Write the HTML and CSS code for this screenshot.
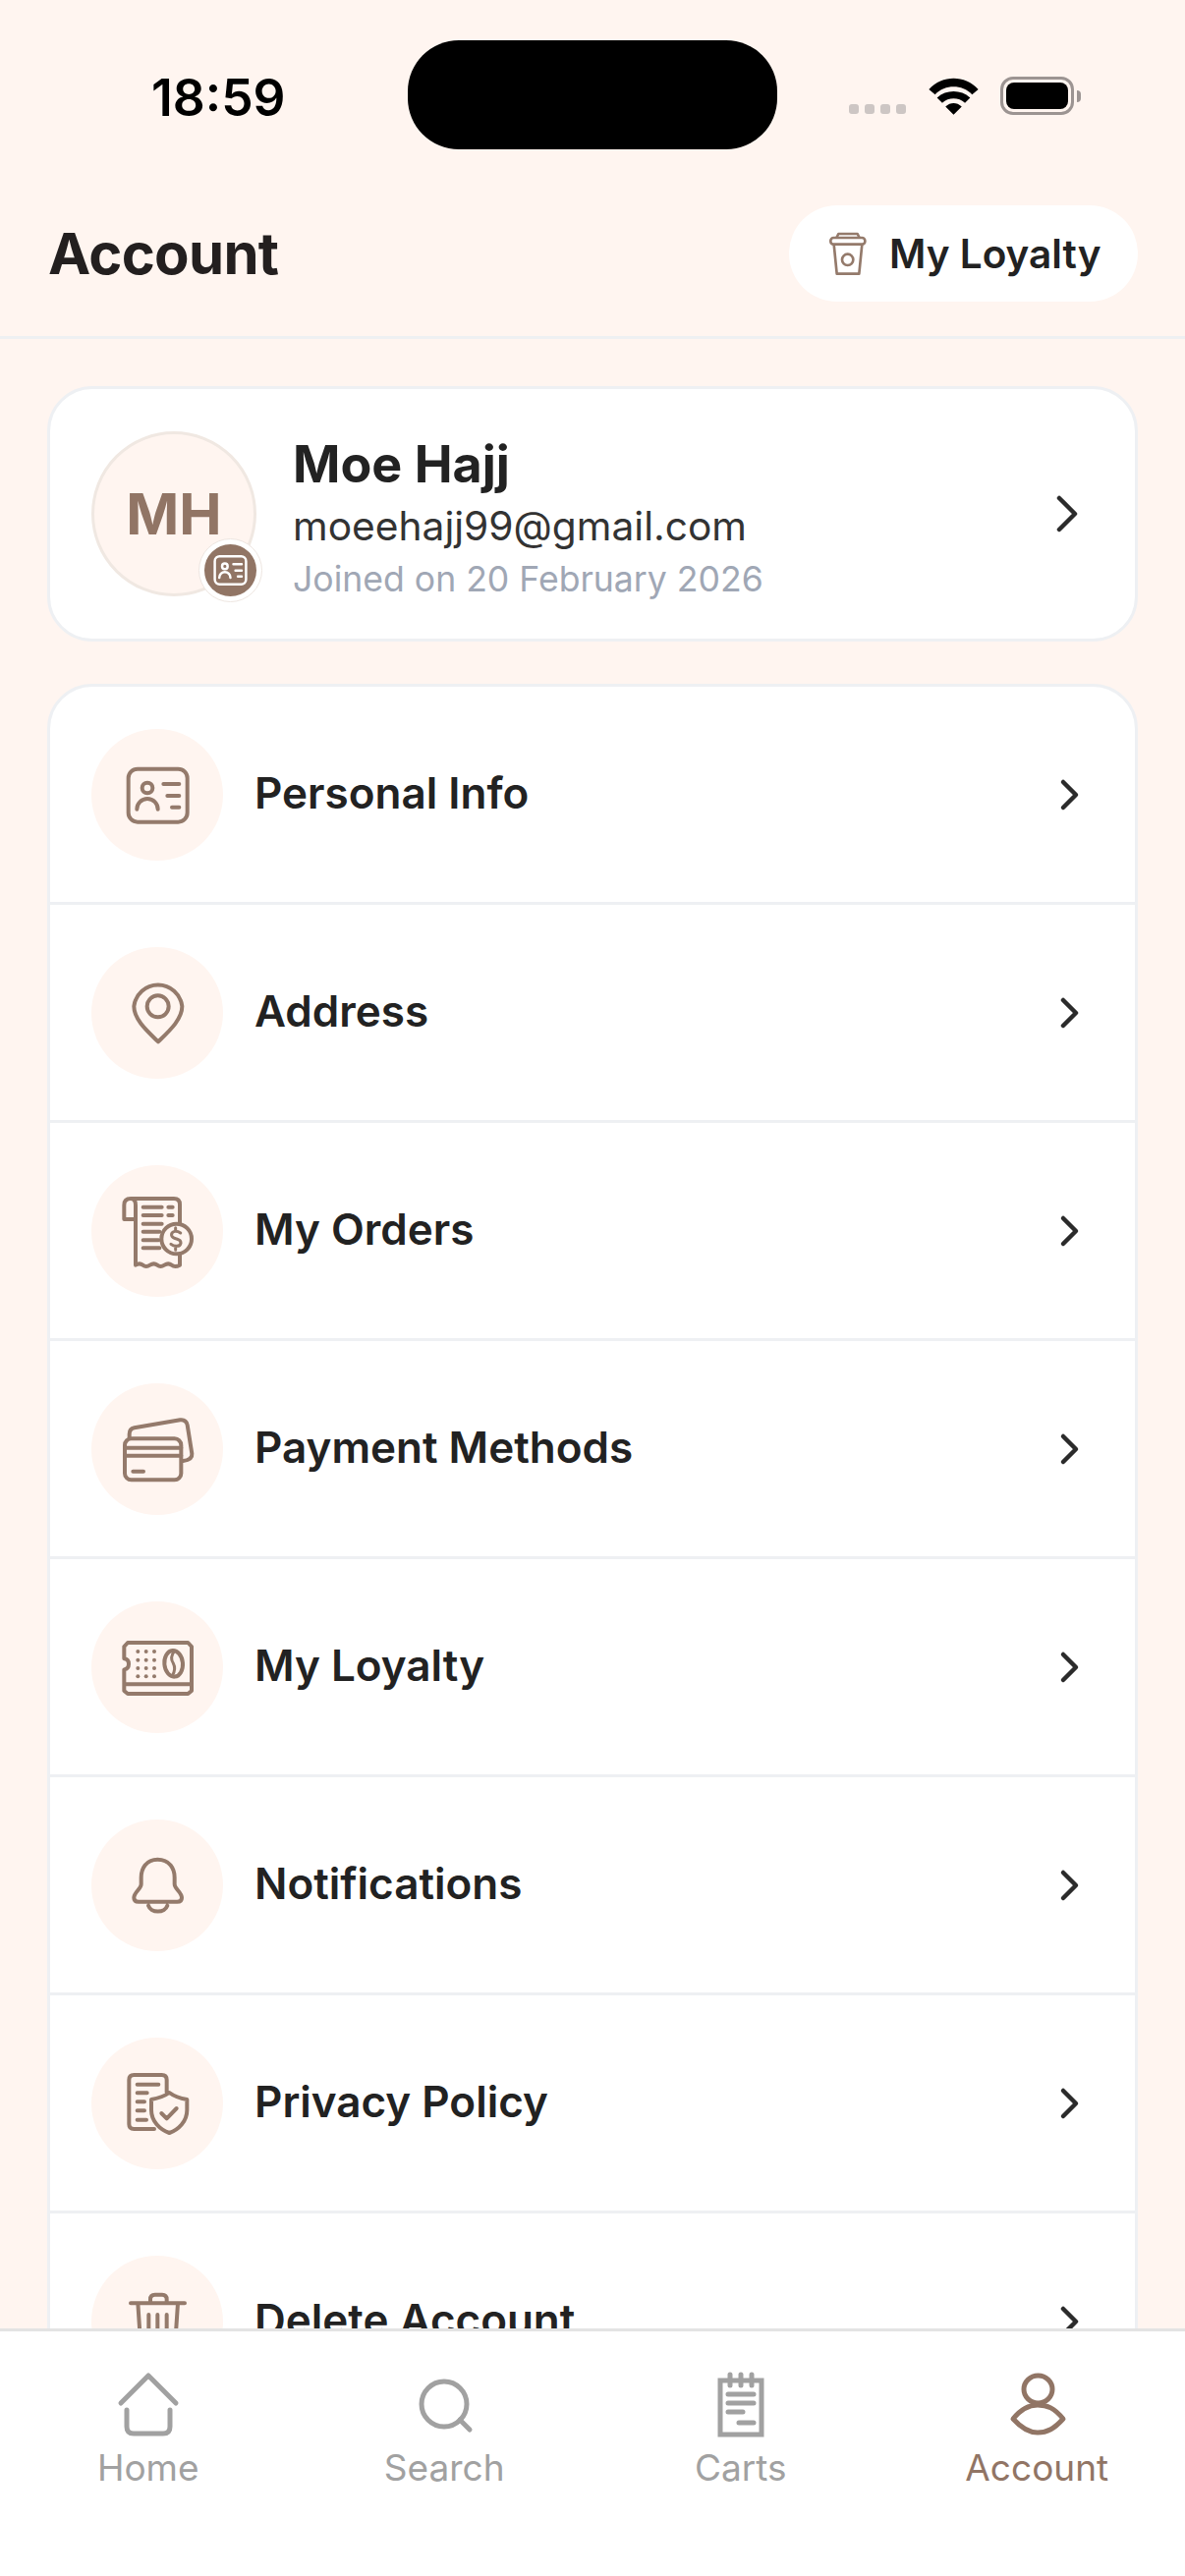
FILE: index.html
```html
<!DOCTYPE html>
<html lang="en">
<head>
<meta charset="utf-8">
<title>Account</title>
<link rel="stylesheet" href="styles.css">
</head>
<body>
<div class="screen">
  <div class="island"></div>
  <main class="scroll">
    <div class="status">
      <span class="time">18:59</span>
      <div class="status-icons">
        <div class="signal"><i></i><i></i><i></i><i></i></div>
        <svg class="wifi" viewBox="435 85 154 115"><path d="M436 121C478 76 546 76 588 121L569 137C538 105 486 105 455 137Z M461 147C490 121 534 121 563 147L547 163C527 145 497 145 477 163Z M487 174C503 160 521 160 537 174L512 199Z" fill="#000"/></svg>
        <div class="battery-wrap"><div class="battery"><div class="battery-fill"></div></div><div class="battery-nub"></div></div>
      </div>
    </div>
    <header class="topbar">
      <h1 class="title">Account</h1>
      <button class="pill">
        <svg class="cup" viewBox="130 560 120 135"><g class="ln7"><path d="M155 578l6-12h58l6 12"/><rect x="137" y="578" width="105" height="20" rx="9"/><path d="M147 598l9 90h68l9-90"/><circle cx="189" cy="645" r="17"/></g></svg>
        <span>My Loyalty</span>
      </button>
    </header>
    <div class="content">
      <section class="profile">
        <div class="avatar">
          <span class="initials">MH</span>
          <div class="badge">
            <svg viewBox="123 116 300 300"><g class="ln-white"><rect x="183" y="185" width="180" height="162" rx="28"/><circle cx="241" cy="243" r="16"/><path d="M209 308a32 32 0 0 1 64 0M290 231h48M302 267h36M316 302h22"/></g></svg>
          </div>
        </div>
        <div class="who">
          <div class="name">Moe Hajj</div>
          <div class="email">moeehajj99@gmail.com</div>
          <div class="joined">Joined on 20 February 2026</div>
        </div>
        <svg class="chev chev-big" viewBox="0 0 24 38"><path d="M3 3l16 16L3 35"/></svg>
      </section>
      <section class="menu">
        <div class="row">
          <div class="ico"><svg viewBox="70 63 402 402"><g class="ln"><rect x="183" y="185" width="180" height="162" rx="28"/><circle cx="241" cy="243" r="16"/><path d="M209 308a32 32 0 0 1 64 0M290 231h48M302 267h36M316 302h22"/></g></svg></div>
          <span class="label">Personal Info</span>
          <svg class="chev" viewBox="0 0 24 38"><path d="M5 6l13 13L5 32"/></svg>
        </div>
        <div class="row">
          <div class="ico"><svg viewBox="70 729 402 402"><g class="ln"><path d="M274 1018C240 985 200 950 200 910A74 74 0 0 1 347 910C347 950 308 985 274 1018Z"/><circle cx="273" cy="910" r="33"/></g></svg></div>
          <span class="label">Address</span>
          <svg class="chev" viewBox="0 0 24 38"><path d="M5 6l13 13L5 32"/></svg>
        </div>
        <div class="row">
          <div class="ico"><svg viewBox="70 105 402 402"><g class="ln"><path d="M340 285V225q0-18-18-18H190q-20 0-20 20v43h35M205 228V410q12 -8 22 0t22 0t22 0t22 0t22 0t25 0V375M190 207q15 0 15 20M228 233h57M305 233h13M228 258h57M305 258h13M228 284h57M228 308h50M228 334h47M228 358h50"/><circle cx="330" cy="330" r="46"/><path class="thin" d="M342 312q-8-6-18-5q-11 3-9 13q2 7 15 10q14 4 13 13q-2 10-14 9q-9 0-16-6M327 296v8M327 356v8"/></g></svg></div>
          <span class="label">My Orders</span>
          <svg class="chev" viewBox="0 0 24 38"><path d="M5 6l13 13L5 32"/></svg>
        </div>
        <div class="row">
          <div class="ico"><svg viewBox="70 771 402 402"><g class="ln"><rect x="172" y="940" width="172" height="126" rx="20"/><path d="M172 968h172M172 992h172M197 1040h32M186 938v-12q0-16 15-19l140-24q18-2 22 15l14 88q2 18-27 22"/></g></svg></div>
          <span class="label">Payment Methods</span>
          <svg class="chev" viewBox="0 0 24 38"><path d="M5 6l13 13L5 32"/></svg>
        </div>
        <div class="row">
          <div class="ico"><svg viewBox="70 117 402 402"><g class="ln"><path d="M181 243h184l11 12v135l-11 9H181l-11-9V325q14-3 14-17t-14-16v-37ZM170 370h206"/><ellipse cx="321" cy="307" rx="28" ry="40" transform="rotate(-5 321 307)"/><path class="thin" d="M324 268q-16 20-4 38q10 18-4 40"/></g><g class="dots"><circle cx="212" cy="270" r="6"/><circle cx="237" cy="270" r="6"/><circle cx="262" cy="270" r="6"/><circle cx="212" cy="296" r="6"/><circle cx="237" cy="296" r="6"/><circle cx="262" cy="296" r="6"/><circle cx="212" cy="321" r="6"/><circle cx="237" cy="321" r="6"/><circle cx="262" cy="321" r="6"/><circle cx="212" cy="346" r="6"/><circle cx="237" cy="346" r="6"/><circle cx="262" cy="346" r="6"/></g></svg></div>
          <span class="label">My Loyalty</span>
          <svg class="chev" viewBox="0 0 24 38"><path d="M5 6l13 13L5 32"/></svg>
        </div>
        <div class="row">
          <div class="ico"><svg viewBox="70 783 402 402"><g class="ln"><path d="M272 905c-35 0-50 28-50 55v20c0 15-22 25-22 42c0 8 6 12 14 12h118c8 0 14-4 14-12c0-17-22-27-22-42v-20c0-27-15-55-52-55ZM244 1046a30 24 0 0 0 58 0"/></g></svg></div>
          <span class="label">Notifications</span>
          <svg class="chev" viewBox="0 0 24 38"><path d="M5 6l13 13L5 32"/></svg>
        </div>
        <div class="row">
          <div class="ico"><svg viewBox="70 129 402 402"><g class="ln"><path d="M262 408H200q-15 0-15-15V258q0-15 15-15h85q15 0 15 15v40M210 272h65M210 298h30M210 325h22M210 352h22M210 380h28M308 297C290 310 270 315 253 318V350C253 385 280 410 308 420C336 410 362 385 362 350V318C345 315 325 310 308 297ZM284 360l16 16l30-31"/></g></svg></div>
          <span class="label">Privacy Policy</span>
          <svg class="chev" viewBox="0 0 24 38"><path d="M5 6l13 13L5 32"/></svg>
        </div>
        <div class="row">
          <div class="ico"><svg viewBox="70 795 402 402"><g class="ln"><path d="M190 940h165M250 940v-12q0-14 14-14h22q14 0 14 14v12M212 940l10 150q2 14 16 14h70q14 0 16-14l10-150M245 975v90M272 975v90M300 975v90"/></g></svg></div>
          <span class="label">Delete Account</span>
          <svg class="chev" viewBox="0 0 24 38"><path d="M5 6l13 13L5 32"/></svg>
        </div>
      </section>
    </div>
  </main>
  <nav class="tabs">
    <div class="tab">
      <svg viewBox="111 2413 80 70"><g class="nv"><path d="M123 2446l28-28l28 28M129 2453v17q0 7 7 7h30q7 0 7-7v-17"/></g></svg>
      <span>Home</span>
    </div>
    <div class="tab">
      <svg viewBox="412 2413 80 70"><g class="nv"><circle cx="452" cy="2447" r="23"/><path d="M468 2463l10 10"/></g></svg>
      <span>Search</span>
    </div>
    <div class="tab">
      <svg viewBox="714 2413 80 70"><g class="nv sq"><rect x="733" y="2423" width="42" height="55"/><path d="M743 2417v11M754 2417v11M765 2417v11M741 2437h26M741 2446h26M741 2455h15M752 2466h15"/></g></svg>
      <span>Carts</span>
    </div>
    <div class="tab active">
      <svg viewBox="1015 2413 80 70"><g class="nv"><ellipse cx="1056.500" cy="2432" rx="14.500" ry="14"/><path d="M1031 2462C1040 2451 1048 2448 1056 2448C1066 2448 1073 2451 1082 2462C1073 2472 1066 2476 1056 2476C1048 2476 1040 2472 1031 2462Z"/></g></svg>
      <span>Account</span>
    </div>
  </nav>
</div>
</body>
</html>
```
FILE: styles.css
```css
* { box-sizing: border-box; }
html, body { margin: 0; padding: 0; }
body { font-family: Inter, "Liberation Sans", sans-serif; background: #fff5f0; }
.screen { position: relative; width: 1206px; height: 2622px; display: flex; flex-direction: column; overflow: hidden; background: #fff5f0; }
.island { position: absolute; left: 415px; top: 41px; width: 376px; height: 111px; border-radius: 52px; background: #000; }
.scroll { flex: 1; min-height: 0; overflow: hidden; }

.status { height: 172px; padding: 71px 106px 0 154px; display: flex; justify-content: space-between; align-items: flex-start; }
.time { font-size: 51.500px; line-height: 56px; font-weight: 600; color: #000; }
.status-icons { display: flex; align-items: flex-start; padding-top: 7px; }
.signal { display: flex; gap: 6px; margin-top: 28px; margin-right: 23px; }
.signal i { width: 10px; height: 10px; border-radius: 3px; background: #cdc6c4; }
.wifi { width: 51px; height: 38px; margin-top: 1px; margin-right: 22px; }
.battery-wrap { display: flex; align-items: center; }
.battery { width: 75px; height: 39px; border: 3px solid #9c9492; border-radius: 13px; padding: 3px; }
.battery-fill { width: 100%; height: 100%; background: #000; border-radius: 8px; }
.battery-nub { width: 4px; height: 12px; margin-left: 3px; border-radius: 0 4px 4px 0; background: #9c9492; }

.topbar { display: flex; align-items: center; justify-content: space-between; padding: 37px 48px 35px 49px; border-bottom: 3px solid #eef0f2; height: 173px; }
.title { margin: 0; font-size: 58px; line-height: 70px; font-weight: 700; color: #231f1f; letter-spacing: -0.700px; }
.pill { display: flex; align-items: center; gap: 22px; height: 98px; width: 355px; padding: 0 0 0 40px; border: 0; border-radius: 49px; background: #fff; font-family: inherit; font-size: 40.500px; font-weight: 600; color: #222; }
.cup { width: 40px; height: 45px; }
.ln7 { fill: none; stroke: #947a6b; stroke-width: 8; stroke-linejoin: round; }

.content { padding: 48px 48px 0; display: flex; flex-direction: column; gap: 43px; }
.profile { display: flex; align-items: center; height: 260px; padding: 0 56px 0 42px; background: #fff; border: 3px solid #eef0f3; border-radius: 46px; }
.avatar { position: relative; flex: none; width: 168px; height: 168px; border: 3px solid #f0e8e2; border-radius: 50%; background: #fff5f0; display: flex; align-items: center; justify-content: center; }
.initials { font-size: 58px; font-weight: 700; color: #917565; }
.badge { position: absolute; right: -9px; bottom: -9px; width: 65px; height: 65px; padding: 5px; border-radius: 50%; background: #fff; border: 1px solid #eee6e1; }
.badge svg { display: block; width: 53px; height: 53px; border-radius: 50%; background: #917565; }
.ln-white { fill: none; stroke: #fff; stroke-width: 14; stroke-linecap: round; }
.who { flex: 1; margin-left: 37px; min-width: 0; padding-top: 7px; }
.name { font-size: 52px; line-height: 62px; font-weight: 700; color: #222; }
.email { font-size: 40.700px; line-height: 64px; color: #333; }
.joined { font-size: 35.600px; line-height: 44px; color: #a0a7b5; }

.chev { flex: none; width: 24px; height: 38px; fill: none; stroke: #2b2b2b; stroke-width: 4.500; stroke-linecap: round; stroke-linejoin: round; }
.chev-big { width: 24px; height: 38px; }

.menu { background: #fff; border: 3px solid #eef0f3; border-radius: 46px 46px 0 0; }
.row { display: flex; align-items: center; height: 222px; padding: 0 54px 0 42px; border-bottom: 3px solid #eef0f3; }
.ico { flex: none; width: 134px; height: 134px; border-radius: 50%; background: #fff5f0; }
.ico svg { display: block; width: 134px; height: 134px; }
.ln { fill: none; stroke: #947a6b; stroke-width: 12; stroke-linecap: round; stroke-linejoin: round; }
.thin { stroke-width: 9; }
.dots { fill: #947a6b; }
.label { flex: 1; margin-left: 32px; margin-bottom: 3px; font-size: 44px; font-weight: 600; color: #222; }

.tabs { flex: none; height: 252px; display: flex; align-items: flex-start; padding-top: 40px; background: #fff; border-top: 3px solid #e3e3e3; }
.tab { flex: 1; display: flex; flex-direction: column; align-items: center; color: #a1a1a1; font-size: 37px; line-height: 50px; font-weight: 400; }
.tab svg { display: block; width: 80px; height: 70px; margin-bottom: 4px; }
.nv { fill: none; stroke: #a1a1a1; stroke-width: 5; stroke-linecap: round; stroke-linejoin: round; }
.sq { stroke-linejoin: miter; }
.active { color: #917565; }
.active .nv { stroke: #917565; }
```
